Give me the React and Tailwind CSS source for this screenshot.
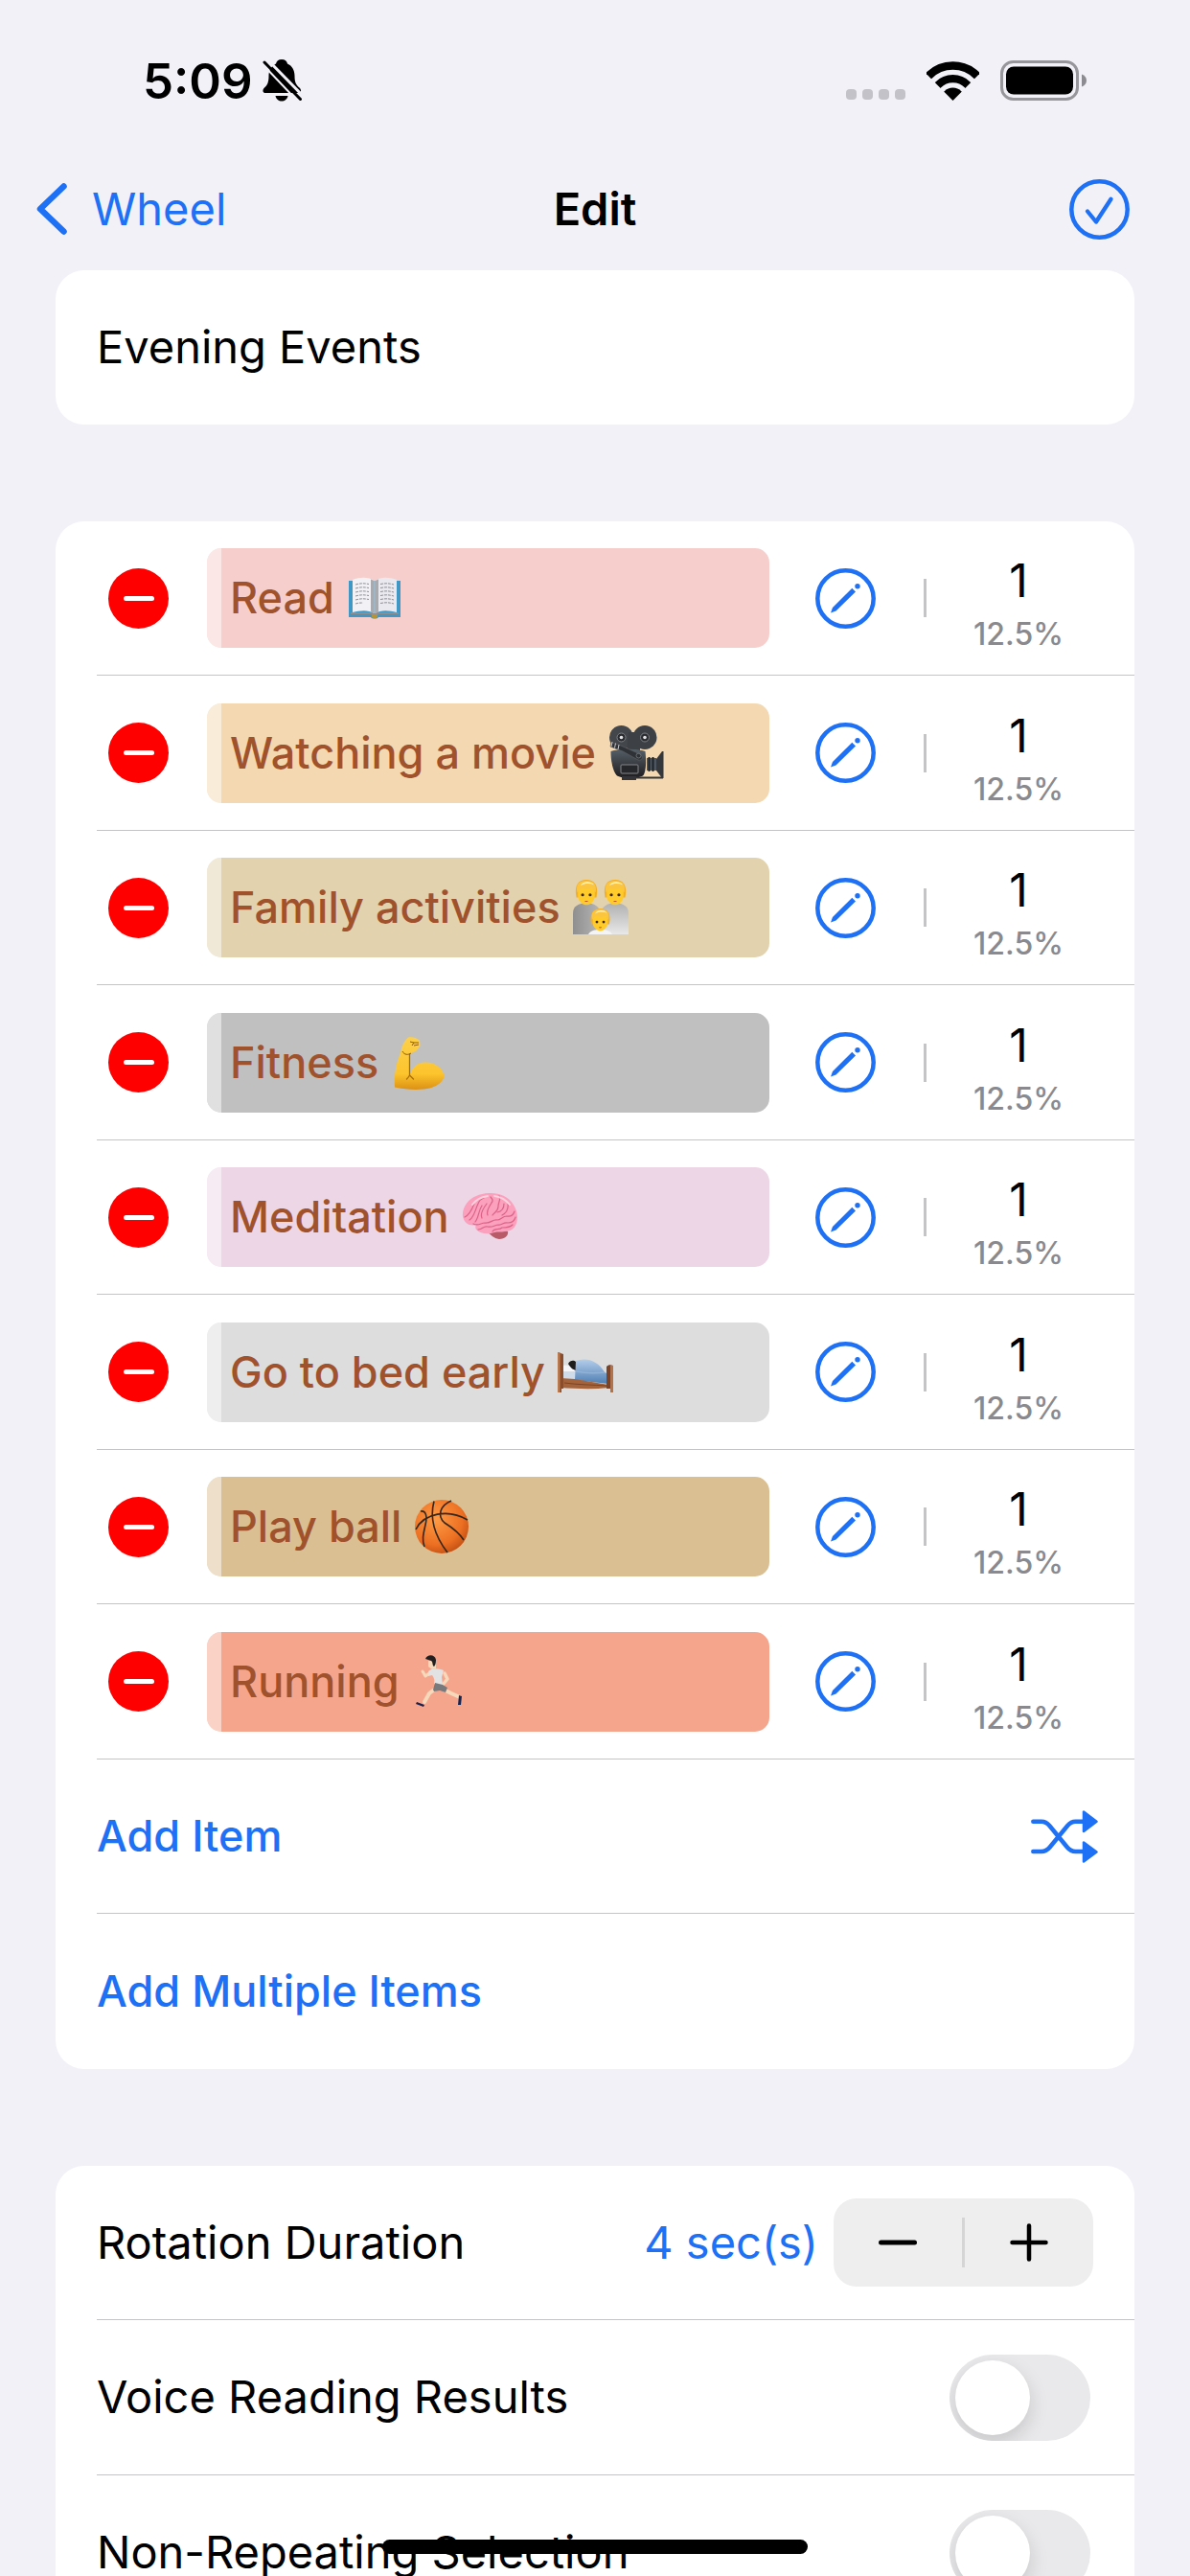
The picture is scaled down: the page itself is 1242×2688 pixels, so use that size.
import React, { useState } from "react";

const BookEmoji = () => (
  <svg width="60" height="60" viewBox="0 0 60 60" role="img" aria-label="open book">
    <path d="M3 12h54v38H34c-1 2-7 2-8 0H3z" fill="#3f97c6" />
    <path d="M5 47h20l5 2 5-2h20v-2H5z" fill="#8d8d90" />
    <path d="M27 47h6v3c-1 1.500-5 1.500-6 0z" fill="#b8932f" />
    <path d="M7 11c8-3 17-3 22.500 1v34C23 42 15 43 7 45z" fill="#f2f2f6" />
    <path d="M53 11c-8-3-17-3-22.500 1v34C37 42 45 43 53 45z" fill="#e9e9ef" />
    <path d="M26 10.500l3.500 1.500v34L26 44.500zM34 10.500L30.500 12v34l3.500-1.500z" fill="#a9a9b0" />
    <path
      d="M10 16c5-1.500 9-1.500 14-.5M10 20c5-1.500 9-1.500 14-.5M10 24c5-1.500 9-1.500 14-.5M10 28c5-1.500 9-1.500 14-.5M10 32c5-1.500 9-1.500 14-.5M10 36c3-1 5-1 8-1M36 15.500c5-1 9-1 14 .5M36 19.500c5-1 9-1 14 .5M36 23.500c5-1 9-1 14 .5M36 27.500c5-1 9-1 14 .5M36 31.500c5-1 9-1 14 .5M36 35.500c5-1 9-1 14 .5"
      fill="none"
      stroke="#8f8f98"
      strokeDasharray="3 1"
    />
  </svg>
);

const CameraEmoji = () => (
  <svg width="60" height="60" viewBox="0 0 60 60" role="img" aria-label="movie camera">
    <defs>
      <linearGradient id="camera-body" x1="0" y1="0" x2="0" y2="1">
        <stop offset="0" stopColor="#566068" />
        <stop offset="1" stopColor="#1d1b1e" />
      </linearGradient>
    </defs>
    <circle cx="14.500" cy="13.500" r="12.500" fill="#43464b" />
    <circle cx="39" cy="13.500" r="12.500" fill="#3d4045" />
    <path d="M22 8h12v20H20z" fill="#3d4045" />
    <path d="M3.500 28c8-3 28-3 36 0 1 10 1 20-2 25-5 4-23 4-28 0-4-5-6-15-6-25z" fill="url(#camera-body)" />
    <path d="M15 54h15v4H15zM30 54.500h28v2H30z" fill="#33343a" />
    <path d="M41 35h10v13H41z" fill="#4c5560" />
    <path d="M43.500 34v15M47.500 34v15" stroke="#1f2226" strokeWidth="2" />
    <path d="M51 36l6-8h1.500v28H57l-6-8z" fill="#34373c" />
    <path d="M4 19l10 3 20 9c4 3 2 7-2 6L16 28 3 23z" fill="#2e3135" stroke="#5b5e63" strokeWidth=".7" />
    <path d="M5 18l-1 5M8.500 19.500l-1 5M12 21l-1 5" stroke="#c9c9cc" />
    <rect x="14" y="42" width="18" height="9" rx="1" fill="#26272b" stroke="#84868a" />
    <circle cx="14.500" cy="13.500" r="4.500" fill="#2a2c30" stroke="#7d8085" />
    <circle cx="39" cy="13.500" r="4.500" fill="#2a2c30" stroke="#7d8085" />
    <circle cx="14.500" cy="13.500" r="1.800" fill="#e2e2e4" />
    <circle cx="39" cy="13.500" r="1.800" fill="#e2e2e4" />
    <circle cx="32.500" cy="32.500" r="2.500" fill="none" stroke="#6b6e73" />
  </svg>
);

const Face = ({ x, y, size }) => (
  <svg x={x} y={y} width={size} height={size} viewBox="0 0 28 32">
    <path d="M2 21C-1 6 5 0 14 0s15 6 12 21z" fill="#f3ae22" />
    <path d="M4 13c0-8 20-8 20 0v6c0 7-6 11-10 11S4 26 4 19z" fill="#ffcb2b" />
    <path d="M3 15C1 5 6 1 14 1s13 4 11 14c-2-1-3-3-4-5-4 2-9 2-12 0-2 1-4 3-6 5z" fill="#fbc540" />
    <path d="M7 7c2-5 12-6 16-1-5-2-11-2-16 1z" fill="#fff3c0" />
    <circle cx="9.500" cy="18" r="1.800" fill="#3a2506" />
    <circle cx="18.500" cy="18" r="1.800" fill="#3a2506" />
    <path d="M12 25h4c-.5 1.500-3.500 1.500-4 0z" fill="#b3372b" />
  </svg>
);

const FamilyEmoji = () => (
  <svg width="60" height="60" viewBox="0 0 60 60" role="img" aria-label="family">
    <defs>
      <linearGradient id="parent-left">
        <stop offset="0" stopColor="#8f8f8f" />
        <stop offset="1" stopColor="#b5b5b5" />
      </linearGradient>
      <linearGradient id="parent-right" x1="0" y1="0" x2="0" y2="1">
        <stop offset="0" stopColor="#b0b0b0" />
        <stop offset="1" stopColor="#e8e8e8" />
      </linearGradient>
    </defs>
    <path d="M1 58V36c0-8 6-10 14-11 8 1 14 3 14 11v22z" fill="url(#parent-left)" />
    <path d="M31 58V36c0-8 6-10 14-11 8 1 14 3 14 11v22z" fill="url(#parent-right)" />
    <path d="M17 58c2-4 7-5 12.500-5S40 54 42 58z" fill="#f4f4f4" />
    <Face x="1" y="1" size="28" />
    <Face x="31" y="1" size="28" />
    <Face x="17" y="31" size="25" />
  </svg>
);

const ArmEmoji = () => (
  <svg width="60" height="60" viewBox="-4 0 60 60" role="img" aria-label="flexed arm">
    <defs>
      <linearGradient id="arm" x1="0" y1="0" x2="0" y2="1">
        <stop offset="0" stopColor="#fdd04a" />
        <stop offset=".7" stopColor="#fcc42d" />
        <stop offset="1" stopColor="#dd9113" />
      </linearGradient>
    </defs>
    <path
      d="M15 3.500c4-1 8 0 12 3l.5 6-4 5-7 3.500c.5 8 .5 16 0 22 3-9 9-14 17-13.500 10 0 18 7 19 14-1 9-12 13-21 14-11 1-21 0-30.500-2C0 44 2 31 7 20c1-6 3-12 8-16.500z"
      fill="url(#arm)"
    />
    <path d="M16.500 21v22l4 4M16.500 43c-1 2-2 3-3 4" fill="none" stroke="#a96d08" strokeWidth="1.300" strokeLinecap="round" />
    <path d="M9 18c2 4 6 4 9 2M17 8l4 1-2 3M21 9h5M21 12l5-1" fill="none" stroke="#8f5a08" />
  </svg>
);

const BrainEmoji = () => (
  <svg width="60" height="60" viewBox="0 0 60 60" role="img" aria-label="brain">
    <path d="M27 45c6-4 18-4 22 0 1 4-3 8-9 8-6-1-8-4-13-8z" fill="#b95a68" />
    <path
      d="M2 29C1 20 8 11 16 8c9-4 21-4 29 0 8 4 14 13 14 22s-5 15-13 15c-4 1-8 0-11 1-6 2-14 2-19-3-1-2-1-4 0-5C9 40 3 36 2 29z"
      fill="#fba0bd"
    />
    <path
      d="M4 30c5-2 8-9 10-14M9 33c5-3 6-11 9-17 1-3 3-5 6-6M15 35c4-5 3-11 7-17M22 31c-2-4 2-11 5-15M28 28c-2-5 2-9 4-13 2-2 1-4-1-6M33 28c2-3 6-4 6-9s3-7 1-11M38 25c5-1 7-4 7-9M43 28c4-2 7-5 6-12M13 37c5 3 8-1 12-1 6 1 8-4 13-3 4 0 5-4 10-4 5 1 7-2 8-5M18 43c5 0 5-4 10-3s8-2 11-2c4 1 5-3 10-2 4 0 7-2 8-6M33 45c2-4 7-1 10-4 4 0 8 0 11-3"
      fill="none"
      stroke="#dd6288"
      strokeWidth="1.200"
      strokeLinecap="round"
    />
    <path d="M12 17c4-6 10-8 16-9M35 8c7 1 12 4 16 9" fill="none" stroke="#ffd0de" strokeWidth="2" strokeLinecap="round" />
  </svg>
);

const BedEmoji = () => (
  <svg width="60" height="60" viewBox="0 0 60 60" role="img" aria-label="person in bed">
    <defs>
      <linearGradient id="blanket" x1="0" y1="0" x2="0" y2="1">
        <stop offset="0" stopColor="#b4cdea" />
        <stop offset="1" stopColor="#4f7fb3" />
      </linearGradient>
    </defs>
    <path d="M5 29h48v8H5z" fill="#cfdbe8" />
    <path d="M5 24c5-3 11-1 15 5H5z" fill="#f4f6fa" />
    <path d="M12 21c2-4 6-4 8-2l1 9c-3 0-6-2-9-7z" fill="#1f1c1c" />
    <path d="M20 18c12-4 23 0 30 12l4 2v10L19 38z" fill="url(#blanket)" />
    <path d="M20 29c10 2 20 2 30 1" fill="none" stroke="#8fb2d8" strokeWidth="1.500" />
    <path d="M4 36l15 1 35 6v3c-17 2-34 1-50 0z" fill="#a4633a" />
    <path d="M8 41c14 2 30 2 44 3" fill="none" stroke="#7b4526" />
    <path d="M1 9l6 2v36H5v4H1z" fill="#8a4d2c" />
    <path d="M1 9h2.500v42H1z" fill="#b97a50" />
    <path d="M52 24c2-2 4-2 7-1v28h-3v-4h-4z" fill="#7b4327" />
    <path d="M56 23h3v28h-3z" fill="#b3734a" />
  </svg>
);

const BasketballEmoji = () => (
  <svg width="60" height="60" viewBox="0 0 60 60" role="img" aria-label="basketball">
    <defs>
      <radialGradient id="ball" cx=".4" cy=".35" r=".7">
        <stop offset="0" stopColor="#ff9b45" />
        <stop offset=".7" stopColor="#ec6f22" />
        <stop offset="1" stopColor="#c14f12" />
      </radialGradient>
    </defs>
    <circle cx="30" cy="30" r="28" fill="url(#ball)" />
    <path
      d="M3 33c8-17 34-22 54-10M22 3.500C17 22 23 40 36 57M40 3c-12 5-15 16-7 23 8 5 15 10 20 18M8 14c6-1 7 6 5 14-2 9-4 16-1 23"
      fill="none"
      stroke="#33261c"
      strokeWidth="1.600"
    />
  </svg>
);

const RunnerEmoji = () => (
  <svg width="60" height="60" viewBox="0 0 60 60" role="img" aria-label="person running">
    <g fill="none" stroke="#f6d9ba" strokeLinecap="round" strokeLinejoin="round">
      <path d="M19 21l-4 3-3-5" strokeWidth="3" />
      <path d="M27 36l-8 6-5 9" strokeWidth="4" />
      <path d="M34 38l8 4 9 4" strokeWidth="4" />
    </g>
    <path d="M18 8h8v8l-4 1-4-3z" fill="#f6d9ba" />
    <path d="M15 6c2-5 10-5 11 1 0 4-1 6-2 7-2-1-1-5-3-6z" fill="#221f20" />
    <path d="M18 19c4-4 11-3 16-1l-2 7 1 8c-3 1-6 1-9-1 1-4 0-6-2-9l-4 1z" fill="#e2e2e4" />
    <path d="M35 21l3 6-5 6" fill="none" stroke="#f6d9ba" strokeWidth="3.500" strokeLinecap="round" strokeLinejoin="round" />
    <path d="M25 31l8 2 5 3-2 5-6-2-6 1-1-2z" fill="#77797d" />
    <path d="M14 54l-8-3-1 2 8 3zM50 44l3 1-1 9h-3z" fill="#17234f" />
  </svg>
);

const initialItems = [
  { id: 1, name: "Read", Emoji: BookEmoji, color: "bg-[#f6cfcd]" },
  { id: 2, name: "Watching a movie", Emoji: CameraEmoji, color: "bg-[#f3d8b1]" },
  { id: 3, name: "Family activities", Emoji: FamilyEmoji, color: "bg-[#e3d2ae]" },
  { id: 4, name: "Fitness", Emoji: ArmEmoji, color: "bg-[#c0c0c0]" },
  { id: 5, name: "Meditation", Emoji: BrainEmoji, color: "bg-[#edd6e6]" },
  { id: 6, name: "Go to bed early", Emoji: BedEmoji, color: "bg-[#dddddd]" },
  { id: 7, name: "Play ball", Emoji: BasketballEmoji, color: "bg-[#dabf92]" },
  { id: 8, name: "Running", Emoji: RunnerEmoji, color: "bg-[#f6a58d]" },
];

const StatusBar = () => (
  <div className="flex h-42 items-center justify-between pl-[149px] pr-[107px]">
    <div className="flex items-center gap-[10px]">
      <span className="text-[51px] font-semibold leading-none">5:09</span>
      <svg width="42" height="44" viewBox="0 0 42 44" aria-hidden="true">
        <path d="M20 0c3.500 0 5.500 2 6 4.500 5 2 7.500 7 7.500 12.500 0 7 1.500 9.500 5 12.500 2.500 2.500 2 5.500-1 5.500H3.500c-3.500 0-4-3-1.500-5.500C5 27 6.500 24 6.500 17c0-5.500 3-10.500 7.500-12.500C14.500 2 16.500 0 20 0z" />
        <path d="M13.500 38h13c-.5 3.500-3.500 5.500-6.500 5.500s-6-2-6.500-5.500z" />
        <path d="M4 -1L44 40" stroke="#f2f1f7" strokeWidth="3" />
        <path d="M-1 4L37 44" stroke="#f2f1f7" strokeWidth="2" />
        <path d="M2 3L39.500 41.500" stroke="#000" strokeWidth="3" strokeLinecap="round" />
      </svg>
    </div>
    <div className="flex items-center">
      <div className="flex gap-[6px] pt-7">
        <span className="size-[11px] rounded-sm bg-[#c3c2c8]" />
        <span className="size-[11px] rounded-sm bg-[#c3c2c8]" />
        <span className="size-[11px] rounded-sm bg-[#c3c2c8]" />
        <span className="size-[11px] rounded-sm bg-[#c3c2c8]" />
      </div>
      <svg className="ml-[22px]" width="55" height="41" viewBox="0 0 55 41" aria-hidden="true">
        <clipPath id="wifi">
          <path d="M27.500 41L-14.500-1.500h84z" />
        </clipPath>
        <g clipPath="url(#wifi)" fill="none" stroke="#000">
          <circle cx="27.500" cy="40" r="35.500" strokeWidth="8.500" />
          <circle cx="27.500" cy="40" r="21.800" strokeWidth="8.200" />
          <circle cx="27.500" cy="40" r="12.500" fill="#000" stroke="none" />
        </g>
      </svg>
      <svg className="ml-[22px]" width="91" height="42" viewBox="0 0 91 42" aria-hidden="true">
        <rect x="1.500" y="1.500" width="79" height="39" rx="12" fill="none" stroke="#97969b" strokeWidth="3" />
        <rect x="6" y="6.500" width="70" height="29" rx="8" />
        <path d="M85 14.500c3 1 5 3.500 5 6.500s-2 5.500-5 6.500z" fill="#8c8b90" />
      </svg>
    </div>
  </div>
);

const PencilCircle = () => (
  <svg width="63" height="63" viewBox="0 0 63 63" aria-hidden="true">
    <circle cx="31.500" cy="31.500" r="29.200" fill="none" stroke="#1e70f5" strokeWidth="4.500" />
    <path d="M16 46.500l2-5.500 20.300-20.200 3.700 3.700L21.500 44.500z" fill="#1e70f5" />
    <circle cx="44" cy="18.800" r="2.700" fill="#1e70f5" />
  </svg>
);

const ShuffleIcon = () => (
  <svg width="70" height="55" viewBox="0 0 70 55" fill="none" stroke="#1e70f5" aria-hidden="true">
    <path
      d="M2.300 11.700H11c4 0 6 1.500 8.500 4.500l18.500 22.500c2.500 3 4.500 4.300 8.500 4.300H55M2.300 43H11c4 0 6-1.300 8.500-4.300L38 16.200c2.500-3 4.500-4.500 8.500-4.500H55"
      strokeWidth="4.500"
      strokeLinecap="round"
    />
    <path d="M55 1.500v20.500L68.500 11.700zM55 33.500v20L68.500 43.500z" fill="#1e70f5" strokeWidth="2.500" strokeLinejoin="round" />
  </svg>
);

const Card = ({ children }) => (
  <ul className="rounded-[30px] bg-white pl-[43px]">{children}</ul>
);

const Row = ({ children }) => (
  <li className="flex items-center border-[#c4c4c6] pr-[43px] not-last:border-b odd:min-h-[161px] even:min-h-[162px]">
    {children}
  </li>
);

const Switch = ({ id }) => (
  <input
    id={id}
    type="checkbox"
    role="switch"
    className="mr-[3px] h-[90px] w-[147px] appearance-none overflow-hidden rounded-full bg-[#e9e9eb] p-[6px] before:block before:size-[78px] before:rounded-full before:bg-white before:shadow-[0_8px_20px_rgba(0,0,0,0.15)] checked:bg-green-500 checked:before:ml-auto"
  />
);

const App = () => {
  const [title, setTitle] = useState("Evening Events");
  const [items, setItems] = useState(initialItems);
  const [seconds, setSeconds] = useState(4);

  const removeItem = (id) => {
    setItems(items.filter((item) => item.id !== id));
  };

  return (
    <div className="h-screen overflow-hidden bg-[#f2f1f7] font-['Inter','Liberation_Sans',sans-serif] text-[47px] text-black">
      <StatusBar />

      <header className="grid h-[100px] grid-cols-[1fr_auto_1fr] items-center">
        <a href="#wheel" className="flex items-center gap-[26px] pl-[38px] text-[#1e70f5]">
          <svg width="32" height="54" viewBox="0 0 32 54" fill="none" aria-hidden="true">
            <path d="M28.500 3.500L4 27l24.500 23.500" stroke="#1e70f5" strokeWidth="6.500" strokeLinecap="round" strokeLinejoin="round" />
          </svg>
          Wheel
        </a>
        <h1 className="text-[47px] font-semibold">Edit</h1>
        <button type="button" aria-label="Done" className="mr-[63px] justify-self-end">
          <svg width="63" height="63" viewBox="0 0 63 63" fill="none" stroke="#1e70f5" aria-hidden="true">
            <circle cx="31.500" cy="31.500" r="29.200" strokeWidth="4.500" />
            <path d="M19 33.500L28 44.500 43.500 20.800" strokeWidth="4.300" strokeLinecap="round" strokeLinejoin="round" />
          </svg>
        </button>
      </header>

      <main className="flex flex-col gap-[101px] px-[58px] pt-[14px]">
        <Card>
          <Row>
            <input
              aria-label="Wheel name"
              className="w-full bg-transparent outline-none"
              value={title}
              onChange={(e) => setTitle(e.target.value)}
            />
          </Row>
        </Card>

        <Card>
          {items.map(({ id, name, Emoji, color }) => (
            <Row key={id}>
              <button
                type="button"
                aria-label={`Remove ${name}`}
                className="ml-3 flex size-[63px] items-center justify-center rounded-full bg-[#ff0000]"
                onClick={() => removeItem(id)}
              >
                <span className="h-[5px] w-8 rounded-full bg-white" />
              </button>
              <div className={`ml-10 flex h-26 flex-1 overflow-hidden rounded-[15px] text-[#a0522d] ${color}`}>
                <span className="w-[15px] bg-white/50" />
                <span className="flex items-center gap-3 pl-[9px] text-[45px] font-medium">
                  {name}
                  <Emoji />
                </span>
              </div>
              <button type="button" aria-label={`Edit ${name}`} className="ml-12">
                <PencilCircle />
              </button>
              <span className="ml-[50px] h-10 w-[3px] bg-[#c4c4c6]" />
              <div className="ml-12 mr-[30px] flex w-24 flex-col items-center pt-1">
                <span className="text-5xl leading-[72px]">1</span>
                <span className="text-[32px] font-medium leading-10 text-[#8a8a8e]">
                  {(100 / items.length).toFixed(1)}%
                </span>
              </div>
            </Row>
          ))}
          <Row>
            <button type="button" className="text-[45px] font-medium text-[#1e70f5]">
              Add Item
            </button>
            <button type="button" aria-label="Shuffle items" className="-mr-[5px] ml-auto">
              <ShuffleIcon />
            </button>
          </Row>
          <Row>
            <button type="button" className="text-[45px] font-medium text-[#1e70f5]">
              Add Multiple Items
            </button>
          </Row>
        </Card>

        <Card>
          <Row>
            <span>Rotation Duration</span>
            <output className="ml-auto mr-4 text-[#1e70f5]">{seconds} sec(s)</output>
            <div className="flex h-[92px] w-[271px] items-center rounded-3xl bg-[#eeeeee]">
              <button
                type="button"
                aria-label="Decrease duration"
                className="flex h-full flex-1 items-center justify-center"
                onClick={() => setSeconds(Math.max(1, seconds - 1))}
              >
                <svg width="40" height="40" viewBox="0 0 40 40" aria-hidden="true">
                  <path d="M2.500 20h35" stroke="#000" strokeWidth="5" strokeLinecap="round" />
                </svg>
              </button>
              <span className="h-[52px] w-[3px] bg-[#d5d5d6]" />
              <button
                type="button"
                aria-label="Increase duration"
                className="flex h-full flex-1 items-center justify-center"
                onClick={() => setSeconds(seconds + 1)}
              >
                <svg width="40" height="40" viewBox="0 0 40 40" aria-hidden="true">
                  <path d="M2.500 20h35M20 2.500v35" stroke="#000" strokeWidth="4.500" strokeLinecap="round" />
                </svg>
              </button>
            </div>
          </Row>
          <Row>
            <label htmlFor="voice" className="flex-1">
              Voice Reading Results
            </label>
            <Switch id="voice" />
          </Row>
          <Row>
            <label htmlFor="non-repeating" className="flex-1">
              Non-Repeating Selection
            </label>
            <Switch id="non-repeating" />
          </Row>
        </Card>
      </main>

      {/* home indicator */}
      <div className="fixed bottom-[23px] left-1/2 h-[15px] w-[444px] -translate-x-1/2 rounded-full bg-black" />
    </div>
  );
};

export default App;
